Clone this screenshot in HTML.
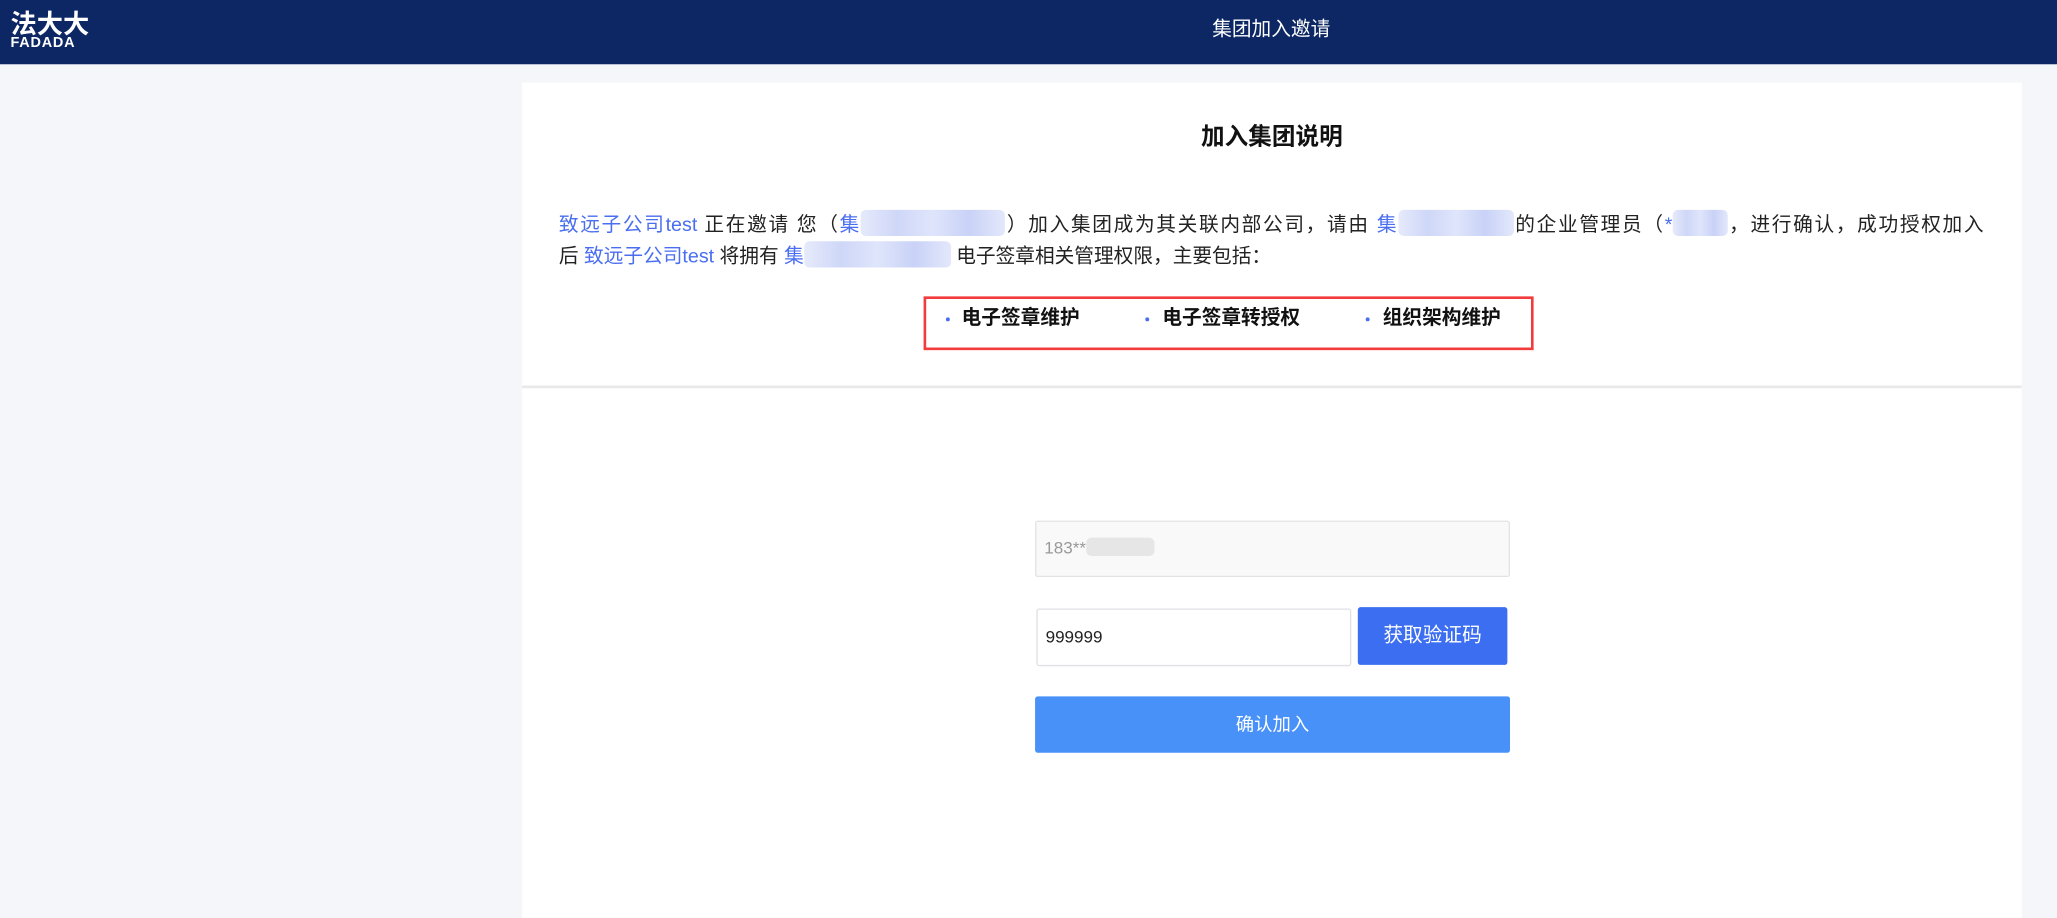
<!DOCTYPE html>
<html><head><meta charset="utf-8"><style>
html,body{margin:0;padding:0;width:2057px;height:918px;overflow:hidden;background:#f4f6fa}
#w{position:absolute;left:0;top:0;width:1568px;height:700px;transform:scale(1.3119,1.3114);transform-origin:0 0;font-family:"Liberation Sans","Microsoft YaHei","Noto Sans CJK SC",sans-serif}
.a{position:absolute}
.hd{left:0;top:0;width:1568px;height:49px;background:#0c2763}
.card{left:398px;top:63px;width:1143px;height:637px;background:#fff}
.blue{color:#4a6ef0}
.bl{display:inline-block;height:20px;vertical-align:-4px;background:linear-gradient(90deg,#e6eafb,#cfd7f8,#dfe5fb,#c9d2f7,#e3e8fb);border-radius:4px}
.line{left:426px;width:1086px;font-size:15px;color:#222;white-space:nowrap;height:24px;line-height:24px}
.it{font-size:15px;font-weight:bold;color:#111;top:233px;line-height:20px}
.dot{width:3px;height:3px;border-radius:50%;background:#4a6ef0;top:242px}
</style></head><body><div id="w">
<div class="a hd"></div>
<div class="a" style="left:8px;top:9px;color:#fff;font-weight:bold;font-size:20px;line-height:20px;letter-spacing:0px">法大大</div>
<div class="a" style="left:8px;top:28px;color:#fff;font-weight:bold;font-size:11px;line-height:11px;letter-spacing:0.6px">FADADA</div>
<div class="a" style="left:924px;top:13px;color:#fff;font-size:15px;line-height:20px">集团加入邀请</div>
<div class="a card"></div>
<div class="a" style="left:398px;width:1143px;top:92px;text-align:center;font-size:18px;font-weight:bold;color:#111;line-height:24px">加入集团说明</div>
<div class="a line" style="top:160px;text-align:justify;text-align-last:justify"><span class="blue">致远子公司test</span> 正在邀请 您（<span class="blue">集</span><span class="bl" style="width:110px"></span>）加入集团成为其关联内部公司，请由 <span class="blue">集</span><span class="bl" style="width:88px"></span>的企业管理员（<span class="blue">*</span><span class="bl" style="width:42px"></span>，进行确认，成功授权加入</div>
<div class="a line" style="top:184px">后 <span class="blue">致远子公司test</span> 将拥有 <span class="blue">集</span><span class="bl" style="width:112px"></span> 电子签章相关管理权限，主要包括：</div>
<div class="a" style="left:704px;top:226px;width:461px;height:37px;border:2px solid #f23b3b"></div>
<div class="a dot" style="left:721px"></div><div class="a it" style="left:733px">电子签章维护</div>
<div class="a dot" style="left:873px"></div><div class="a it" style="left:886px">电子签章转授权</div>
<div class="a dot" style="left:1041px"></div><div class="a it" style="left:1054px">组织架构维护</div>
<div class="a" style="left:398px;top:294px;width:1143px;height:2px;background:#e8e8e8"></div>
<div class="a" style="left:789px;top:397px;width:360px;height:41px;background:#f9f9f9;border:1px solid #e3e3e3;border-radius:2px"></div>
<div class="a" style="left:796px;top:410px;font-size:13px;color:#999;line-height:16px">183**<span style="display:inline-block;width:52px;height:14px;background:#e6e6e6;vertical-align:-2px;border-radius:4px"></span></div>
<div class="a" style="left:790px;top:464px;width:238px;height:42px;background:#fff;border:1px solid #e0e0e6;border-radius:2px"></div>
<div class="a" style="left:797px;top:478px;font-size:13px;color:#222;line-height:16px">999999</div>
<div class="a" style="left:1035px;top:463px;width:114px;height:44px;background:#3c6ef2;border-radius:2px;color:#fff;font-size:15px;line-height:44px;text-align:center">获取验证码</div>
<div class="a" style="left:789px;top:531px;width:362px;height:43px;background:#4891f8;border-radius:2px;color:#fff;font-size:14px;line-height:43px;text-align:center">确认加入</div>
</div></body></html>
